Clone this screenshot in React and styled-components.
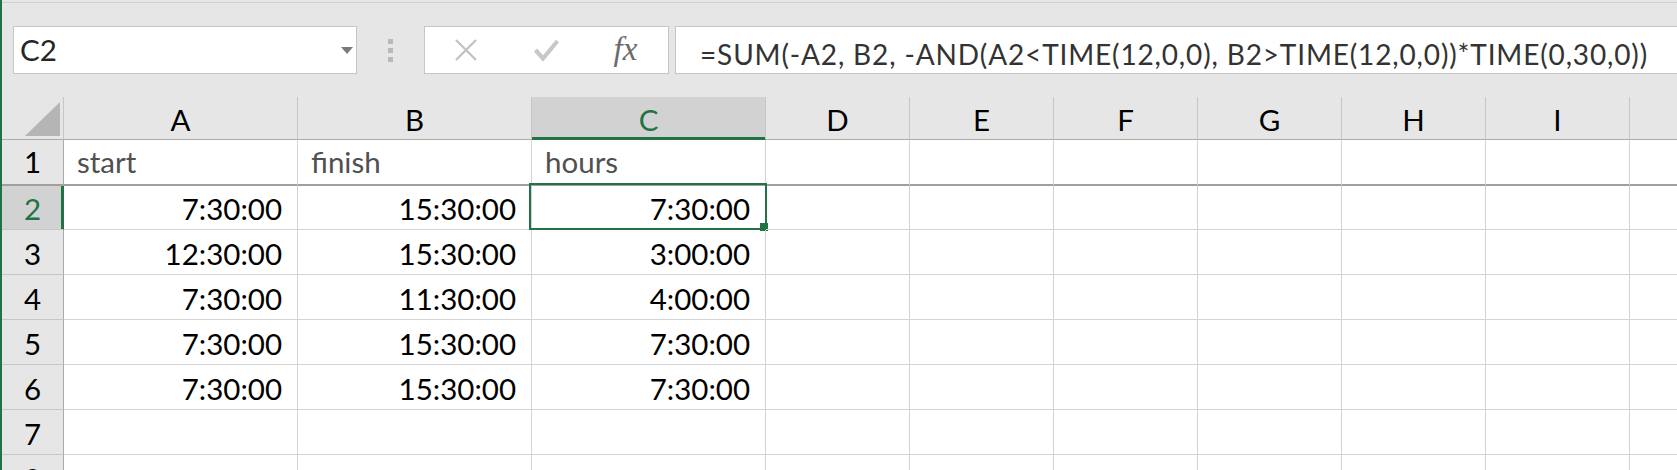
import React from "react";
import styled, { createGlobalStyle, css } from "styled-components";

const GREEN = "#217346";

const Global = createGlobalStyle`
  html, body { margin: 0; padding: 0; background: #e6e6e6; }
  body { font-family: Lato, "Open Sans", sans-serif; }
`;

const Window = styled.div`
  width: 1677px;
  height: 470px;
  overflow: hidden;
  box-sizing: border-box;
  border-left: 2px solid ${GREEN};
  background: #e6e6e6;
  display: flex;
  flex-direction: column;
`;

const FormulaBar = styled.div`
  height: 95px;
  margin-top: 2px;
  flex: none;
  box-sizing: border-box;
  border-top: 1px solid #d0d0d0;
  padding: 23px 0 0 11px;
  display: flex;
  align-items: flex-start;
`;

const Box = styled.div`
  box-sizing: border-box;
  height: 48px;
  background: #fff;
  border: 1px solid #c6c6c6;
`;

const NameBox = styled(Box)`
  width: 344px;
  display: flex;
  align-items: center;
  justify-content: space-between;
  padding: 0 3px 0 6px;
`;

const NameText = styled.span`
  font-size: 29.5px;
  line-height: 1;
  color: #262626;
`;

const DropArrow = styled.span`
  width: 0;
  height: 0;
  border-left: 6.5px solid transparent;
  border-right: 6.5px solid transparent;
  border-top: 7px solid #7a7a7a;
`;

const Grip = styled.div`
  margin: 13px 0 0 31px;
  display: flex;
  flex-direction: column;
  gap: 4px;
`;

const GripDot = styled.span`
  width: 5px;
  height: 5px;
  background: #b9b9b9;
`;

const FuncBox = styled(Box)`
  width: 245px;
  margin-left: 31px;
  display: grid;
  grid-template-columns: repeat(3, 1fr);
  align-items: center;
  justify-items: center;
`;

const Fx = styled.span`
  font-family: "Liberation Serif", "DejaVu Serif", serif;
  font-style: italic;
  font-size: 33px;
  line-height: 1;
  color: #6b6b6b;
  margin: -2px 0 0 -4px;
`;

const FormulaInput = styled(Box)`
  flex: 1;
  margin-left: 6px;
  border-right: none;
  padding: 13px 0 0 24px;
  font-size: 28px;
  letter-spacing: 0.85px;
  line-height: 1;
  color: #333;
  white-space: nowrap;
`;

const Sheet = styled.div`
  display: grid;
  grid-template-columns: 62px repeat(3, 234px) repeat(7, 144px);
  grid-template-rows: 43px 46px 44px repeat(6, 45px);
  background: #fff;
`;

const cellText = css`
  box-sizing: border-box;
  display: flex;
  align-items: flex-end;
  font-size: 29.5px;
  line-height: 1;
  white-space: nowrap;
  overflow: visible;
`;

const Corner = styled.div`
  box-sizing: border-box;
  background: #e6e6e6;
  border-right: 1px solid #c6c6c6;
  border-bottom: 1px solid #ababab;
  display: flex;
  justify-content: flex-end;
  align-items: flex-end;
  padding: 0 3px 3px 0;
`;

const ColHead = styled.div`
  ${cellText};
  justify-content: center;
  padding-bottom: 5px;
  background: ${(p) => (p.$active ? "#d2d2d2" : "#e6e6e6")};
  color: ${(p) => (p.$active ? GREEN : "#000")};
  border-right: 1px solid #c6c6c6;
  border-bottom: 1px solid ${(p) => (p.$active ? GREEN : "#ababab")};
  box-shadow: ${(p) => (p.$active ? `inset 0 -2px 0 ${GREEN}` : "none")};
`;

const RowHead = styled.div`
  ${cellText};
  justify-content: center;
  padding-bottom: ${(p) => (p.$frozen ? 8 : 6)}px;
  background: ${(p) => (p.$active ? "#d2d2d2" : "#e6e6e6")};
  color: ${(p) => (p.$active ? GREEN : "#000")};
  border-right: 1px solid ${(p) => (p.$active ? GREEN : "#ababab")};
  box-shadow: ${(p) => (p.$active ? `inset -2px 0 0 ${GREEN}` : "none")};
  border-bottom: ${(p) => (p.$frozen ? "2px solid #a0a0a0" : "1px solid #c6c6c6")};
`;

const Cell = styled.div`
  ${cellText};
  position: relative;
  justify-content: ${(p) => (p.$align === "left" ? "flex-start" : "flex-end")};
  padding: 0 15px ${(p) => (p.$frozen ? 8 : 6)}px 13px;
  color: ${(p) => (p.$muted ? "#505050" : "#000")};
  border-right: 1px solid #d4d4d4;
  border-bottom: ${(p) => (p.$frozen ? "2px solid #a0a0a0" : "1px solid #d4d4d4")};
`;

const Selection = styled.div`
  position: absolute;
  left: -3px;
  top: -3px;
  right: -2px;
  bottom: -1px;
  border: 2px solid ${GREEN};
  pointer-events: none;
`;

const FillHandle = styled.span`
  position: absolute;
  right: -3px;
  bottom: -3px;
  width: 8px;
  height: 8px;
  background: ${GREEN};
`;

const COLS = ["A", "B", "C", "D", "E", "F", "G", "H", "I", ""];
const ROWS = [
  ["start", "finish", "hours"],
  ["7:30:00", "15:30:00", "7:30:00"],
  ["12:30:00", "15:30:00", "3:00:00"],
  ["7:30:00", "11:30:00", "4:00:00"],
  ["7:30:00", "15:30:00", "7:30:00"],
  ["7:30:00", "15:30:00", "7:30:00"],
  [],
  [],
];

const XIcon = () => (
  <svg width="24" height="22" viewBox="0 0 24 22">
    <path d="M2 1 L22 21 M22 1 L2 21" stroke="#c2c2c2" strokeWidth="2.3" fill="none" />
  </svg>
);

const CheckIcon = () => (
  <svg width="27" height="24" viewBox="0 0 27 24">
    <polyline points="2.5,12 10,20.5 24.5,3" stroke="#c8c8c8" strokeWidth="4.2" fill="none" strokeLinejoin="miter" />
  </svg>
);

const CornerTriangle = () => (
  <svg width="35" height="34" viewBox="0 0 35 34">
    <polygon points="0,34 35,0 35,34" fill="#b5b5b5" />
  </svg>
);

export default function App() {
  return (
    <>
      <Global />
      <Window>
        <FormulaBar>
          <NameBox>
            <NameText>C2</NameText>
            <DropArrow />
          </NameBox>
          <Grip>
            <GripDot />
            <GripDot />
            <GripDot />
          </Grip>
          <FuncBox>
            <XIcon />
            <CheckIcon />
            <Fx>fx</Fx>
          </FuncBox>
          <FormulaInput>
            =SUM(-A2, B2, -AND(A2&lt;TIME(12,0,0), B2&gt;TIME(12,0,0))*TIME(0,30,0))
          </FormulaInput>
        </FormulaBar>
        <Sheet>
          <Corner>
            <CornerTriangle />
          </Corner>
          {COLS.map((c, i) => (
            <ColHead key={i} $active={c === "C"}>
              {c}
            </ColHead>
          ))}
          {ROWS.map((row, ri) => {
            const n = ri + 1;
            const frozen = n === 1;
            return (
              <React.Fragment key={n}>
                <RowHead $active={n === 2} $frozen={frozen}>
                  {n}
                </RowHead>
                {COLS.map((c, ci) => {
                  const v = row[ci] || "";
                  const selected = n === 2 && ci === 2;
                  return (
                    <Cell
                      key={ci}
                      $frozen={frozen}
                      $align={frozen ? "left" : "right"}
                      $muted={frozen}
                    >
                      {v}
                      {selected && (
                        <Selection>
                          <FillHandle />
                        </Selection>
                      )}
                    </Cell>
                  );
                })}
              </React.Fragment>
            );
          })}
        </Sheet>
      </Window>
    </>
  );
}
